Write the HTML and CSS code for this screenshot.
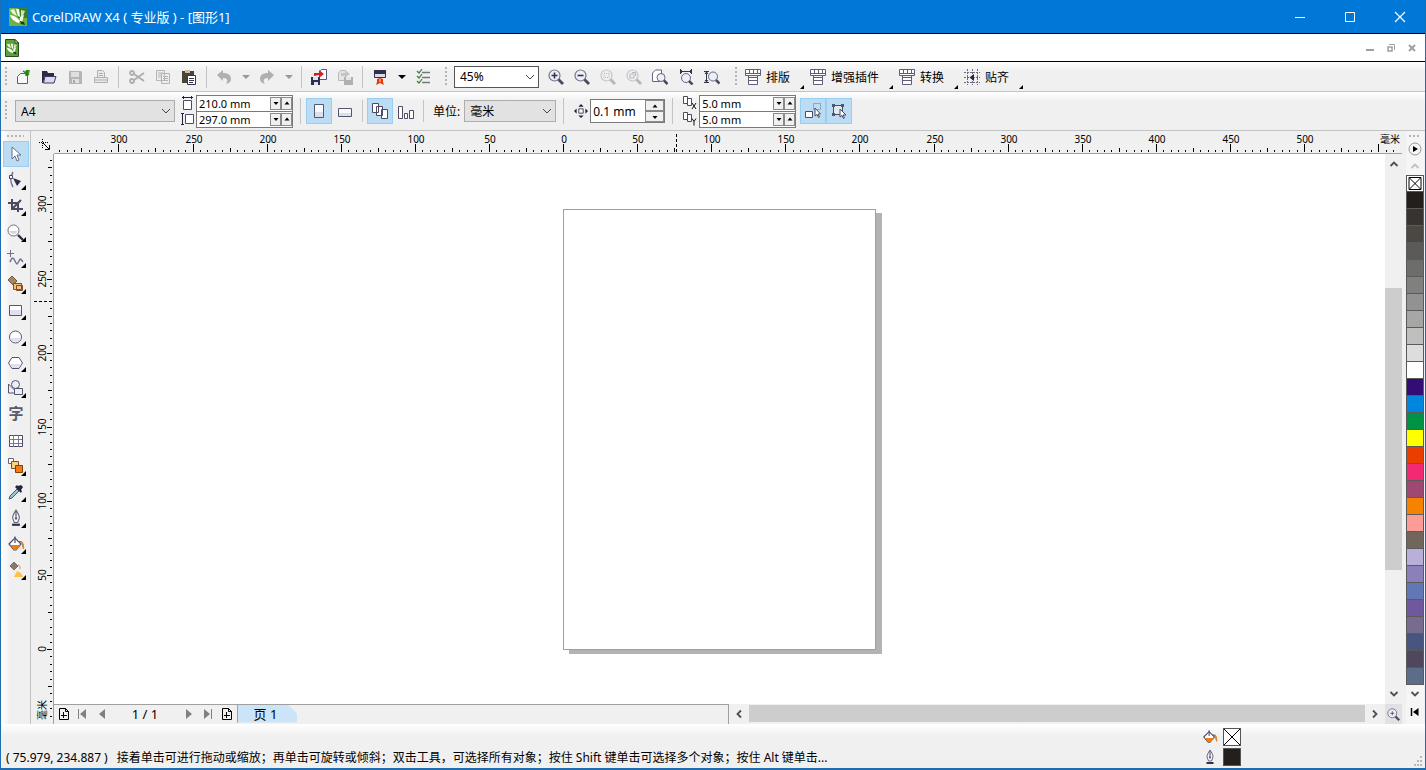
FILE: index.html
```html
<!DOCTYPE html>
<html lang="zh-CN">
<head>
  <meta charset="UTF-8">
  <meta name="viewport" content="width=device-width, initial-scale=1.0">
  <title>CorelDRAW X4 ( 专业版 ) - [图形1]</title>
  <link rel="stylesheet" href="styles.css">
</head>
<body>

<!-- Shared icons -->
<svg class="defs" aria-hidden="true">
  <symbol id="chev-down" viewBox="0 0 10 10"><path d="M1 3l4 4 4-4" fill="none" stroke="currentColor"/></symbol>
  <symbol id="chev" viewBox="0 0 10 10"><path d="M1.500 7L5 3.500 8.500 7" fill="none" stroke="currentColor" stroke-width="1.800"/></symbol>
  <symbol id="tri-down" viewBox="0 0 8 8"><path d="M0 2h8L4 6z" fill="currentColor"/></symbol>
  <symbol id="spin-down" viewBox="0 0 8 8"><path d="M1.500 3h5L4 6z"/></symbol>
  <symbol id="spin-up" viewBox="0 0 8 8"><path d="M1.500 5.500h5L4 2.500z"/></symbol>
  <symbol id="corner" viewBox="0 0 5 5"><path d="M5 0v5H0z"/></symbol>
  <symbol id="lens" viewBox="0 0 16 16"><circle cx="6.500" cy="6.500" r="5.500" fill="#eceef8" stroke="#77778c" stroke-width="1.200"/><path d="M10.500 10.500l4.500 4.500" stroke="#4a4a5c" stroke-width="2.800"/></symbol>
  <symbol id="streaks" viewBox="0 0 18 18"><path d="M1 2l4-1 3 7L4 6z" fill="#e9f5d8"/><path d="M7 1l3 0 1 8-2-1z" fill="#fff"/><path d="M12 2l4 1-3 7-1-1z" fill="#cfe6b4"/><path d="M1 7c3 0 7 2 10 6l-1 2C6 14 2 11 1 7z" fill="#fff"/><path d="M11 9l4-2-2 7-2-1z" fill="#f4faea"/><path d="M11 13l4 1 1 3-4-1z" fill="#1b3f14"/></symbol>
  <symbol id="logo" viewBox="0 0 18 18"><path d="M0 0h18v18H0z" fill="#6db33f"/><path d="M9 0h9v10H9z" fill="#3f7f2c"/><use href="#streaks"/></symbol>
  <symbol id="doc" viewBox="0 0 14 18"><path d="M.500.500h9.500l3.500 3.500v13.500H.500z" fill="#5da236" stroke="#2c4a24"/><path d="M10 .5V4h3.500z" fill="#dfe8d6" stroke="#2c4a24"/><svg x="1" y="3" width="12" height="14"><use href="#streaks"/></svg></symbol>
  <symbol id="macro" viewBox="0 0 16 16"><path d="M.5.500h15v6H.5zM3.500 8.500h9v7h-9zM3.500 11.500h9" fill="#fff" stroke="#5e5e7a"/><path d="M.5 4.500h15M4.500 1v4M8.500 1v4M12.500 1v4M3.500 6v3M12.500 6v3" stroke="#5e5e7a"/></symbol>
  <symbol id="bucket" viewBox="0 0 18 18"><path d="M2 9l6-6 6 6-5 6H7z" fill="#fff" stroke="#4c4c68" stroke-width="1.200"/><path d="M3 10h11l-5 5H7z" fill="#f07d12"/><path d="M8 8V1.500M12 7c3-1 4 1 4 5" fill="none" stroke="#4c4c68" stroke-width="1.200"/><path d="M14 7c2 1 2.500 3 2.500 7" fill="none" stroke="#e08a28" stroke-width="1.600"/></symbol>
  <symbol id="pen" viewBox="0 0 16 16"><path d="M8 1c-2 3-3 5-3 7l1.500 4h3L11 8c0-2-1-4-3-7z" fill="#f4f5fb" stroke="#66667e"/><path d="M8 2v6" stroke="#4f4f68"/><circle cx="8" cy="8.500" r="1" fill="#4f4f68"/><path d="M4.500 13h7v2h-7z" fill="#33334a"/></symbol>
  <symbol id="addpage" viewBox="0 0 12 12"><path d="M1.500.500h6l3 3v8h-9zM7.500.500v3h3M5.500 4v6M3 7.500h6" fill="none" stroke="#000"/></symbol>
</svg>

<div class="window">
  <header class="titlebar">
    <svg class="app-icon"><use href="#logo"/></svg>
    <h1>CorelDRAW X4 ( 专业版 ) - [图形1]</h1>
    <button class="win-btn" aria-label="最小化"><svg viewBox="0 0 12 12"><path d="M1 6.500h10" stroke="#fff"/></svg></button>
    <button class="win-btn" aria-label="最大化"><svg viewBox="0 0 12 12"><path d="M1.500 1.500h9v9h-9z" stroke="#fff" fill="none"/></svg></button>
    <button class="win-btn" aria-label="关闭"><svg viewBox="0 0 12 12"><path d="M1 1l10 10M11 1L1 11" stroke="#fff" stroke-width="1.200"/></svg></button>
  </header>

  <div class="menubar">
    <svg class="doc-icon"><use href="#doc"/></svg>
    <button class="mdi-btn" aria-label="最小化文档"><svg viewBox="0 0 10 10"><path d="M1 7h8" stroke="#a0a0a0" stroke-width="2"/></svg></button>
    <button class="mdi-btn" aria-label="还原文档"><svg viewBox="0 0 10 10"><path d="M3 1.500h5.500V7" fill="none" stroke="#a0a0a0"/><path d="M2 4h4v4H2z" fill="none" stroke="#a0a0a0" stroke-width="1.500"/></svg></button>
    <button class="mdi-btn" aria-label="关闭文档"><svg viewBox="0 0 10 10"><path d="M2 2l6 6M8 2L2 8" stroke="#a0a0a0" stroke-width="2"/></svg></button>
  </div>

  <!-- Standard toolbar -->
  <div class="toolbar standard">
    <span class="grip"></span>
    <button class="tool" aria-label="新建"><svg viewBox="0 0 16 16"><path d="M2.500 14.500v-7l3-3h7v10z" fill="#f7f8fc" stroke="#5d5d7c"/><path d="M9 4l2-3 4 0-1 4-3 2z" fill="#3d9a22"/><path d="M8 2l6 4M13 1l-2 6" stroke="#2d7d18" stroke-width="1.200"/></svg></button>
    <button class="tool" aria-label="打开"><svg viewBox="0 0 16 16"><path d="M1 2h5l1 2h6v3H4L2 14H1z" fill="#2b2b48"/><path d="M4 7.500h11l-2 6.500H2.500z" fill="#d7dbef" stroke="#3b3b5e"/></svg></button>
    <button class="tool" aria-label="保存" disabled><svg viewBox="0 0 16 16"><path d="M2 2h12l1 1v12H2z" fill="#b5b5b5"/><path d="M4 3h8v5H4zM5 10h7v4H5z" fill="#e0e0e0"/><path d="M6 11h2v3H6z" fill="#aaa"/></svg></button>
    <button class="tool" aria-label="打印" disabled><svg viewBox="0 0 16 16"><path d="M4.500 8V1.500h5l2 2V8M1.500 8.500h13v5h-13z" fill="#e8e8e8" stroke="#b0b0b0"/><path d="M6 4.500h4M6 6.500h4M2 11h12" stroke="#b0b0b0"/></svg></button>
    <span class="sep"></span>
    <button class="tool" aria-label="剪切" disabled><svg viewBox="0 0 16 16"><g fill="none" stroke="#adadad" stroke-width="1.800"><circle cx="3" cy="4" r="2"/><circle cx="3" cy="12" r="2"/><path d="M5 5l10 7M5 11l10-7"/></g></svg></button>
    <button class="tool" aria-label="复制" disabled><svg viewBox="0 0 16 16"><path d="M1.500 1.500h8v10h-8zM6.500 4.500h8v10h-8z" fill="#eee" stroke="#b5b5b5"/><path d="M3 4h5M3 6h3M3 8h3M8 7.500h5M8 9.500h5M8 11.500h5" stroke="#b5b5b5"/></svg></button>
    <button class="tool" aria-label="粘贴"><svg viewBox="0 0 16 16"><path d="M1 2h12v12H1z" fill="#4a4336"/><path d="M4 1h5v3H4z" fill="#c9bd9b"/><path d="M6.500 6.500h8v9h-8z" fill="#fff" stroke="#34345a"/><path d="M8 9.500h5M8 11.500h5M8 13.500h4" stroke="#34345a"/></svg></button>
    <span class="sep narrow"></span>
    <button class="tool" aria-label="撤消" disabled><svg viewBox="0 0 16 16"><path d="M1 6l6-5v3c5 0 8 2 8 6 0 3-2 4-5 5 2-3 2-6-3-6v3z" fill="#b0b0b0"/></svg></button>
    <button class="drop dim" aria-label="撤消列表" disabled><svg><use href="#tri-down"/></svg></button>
    <button class="tool" aria-label="重做" disabled><svg viewBox="0 0 16 16"><path d="M15 6L9 1v3c-5 0-8 2-8 6 0 3 2 4 5 5-2-3-2-6 3-6v3z" fill="#b0b0b0"/></svg></button>
    <button class="drop dim" aria-label="重做列表" disabled><svg><use href="#tri-down"/></svg></button>
    <span class="sep narrow"></span>
    <button class="tool" aria-label="导入"><svg viewBox="0 0 16 16"><path d="M8.500 10.500V3l2-2.500h5v10z" fill="#fff" stroke="#55557a"/><path d="M0 8h9v8H0z" fill="#2e2e50"/><path d="M2 8h5v3H2zM3 13h4v3H3z" fill="#dfe2f2"/><path d="M3 7V4h5V1l5 4-5 4V6z" fill="#d3201c"/></svg></button>
    <button class="tool" aria-label="导出" disabled><svg viewBox="0 0 16 16"><path d="M1.500 11.500V4l2-2.500h5v10z" fill="#e5e5e5" stroke="#b8b8b8"/><path d="M7 8h9v8H7z" fill="#b0b0b0"/><path d="M9 8h5v3H9z" fill="#e5e5e5"/><path d="M4 7V4h4V1l5 4-5 4V7z" fill="#c4c4c4"/></svg></button>
    <span class="sep narrow"></span>
    <button class="tool" aria-label="应用程序启动器"><svg viewBox="0 0 16 16"><path d="M2.500 1.500h11v7h-11z" fill="#d9dcea" stroke="#31314e"/><path d="M2 1h12v4H2z" fill="#31314e"/><path d="M5 10l3-1 3 1v3l1 3-4-2-4 2 1-3z" fill="#e3341a"/><path d="M7 10h2v3H7z" fill="#f79533"/></svg></button>
    <button class="drop" aria-label="启动器列表"><svg><use href="#tri-down"/></svg></button>
    <button class="tool" aria-label="选项"><svg viewBox="0 0 16 16"><path d="M7 3.500h8M7 8.500h8M7 13.500h8" stroke="#6c7c78" stroke-width="1.500"/><path d="M2 2l2 2 3-4M2 7l2 2 3-4M2 12l2 2 3-4" fill="none" stroke="#3b7a3a" stroke-width="1.200"/></svg></button>
    <span class="grip mid"></span>
    <label class="combo zoom-level"><select aria-label="缩放级别"><option>45%</option></select><svg><use href="#chev-down"/></svg></label>
    <button class="tool" aria-label="放大"><svg viewBox="0 0 16 16"><use href="#lens"/><path d="M3.500 6.500h6M6.500 3.500v6" stroke="#33334a" stroke-width="1.600"/></svg></button>
    <button class="tool" aria-label="缩小"><svg viewBox="0 0 16 16"><use href="#lens"/><path d="M3.500 6.500h6" stroke="#33334a" stroke-width="1.600"/></svg></button>
    <button class="tool faded" aria-label="缩放选定范围" disabled><svg viewBox="0 0 16 16"><use href="#lens"/><path d="M4 4.500h5v4H4z" fill="none" stroke="#555" stroke-dasharray="1 1"/></svg></button>
    <button class="tool faded" aria-label="缩放全部对象" disabled><svg viewBox="0 0 16 16"><use href="#lens"/><path d="M4 5h4v4H4zM6 3.500h3.500V7" fill="none" stroke="#555"/></svg></button>
    <button class="tool" aria-label="缩放页面"><svg viewBox="0 0 16 16"><path d="M.5 12.500V4l3-3h6v11.500z" fill="#fff" stroke="#66667f"/><circle cx="9" cy="8.500" r="4" fill="#eceef8" stroke="#66667f"/><path d="M12 11.500l3.500 3.500" stroke="#4a4a5c" stroke-width="2.500"/></svg></button>
    <button class="tool" aria-label="按页宽显示"><svg viewBox="0 0 16 16"><circle cx="8" cy="9" r="4.500" fill="#eceef8" stroke="#66667f"/><path d="M11 12l3.500 3.500" stroke="#4a4a5c" stroke-width="2.500"/><path d="M2 2.500h12M2.500 0v5M13.500 0v5M4 1L2.500 2.500 4 4M12 1l1.500 1.500L12 4" fill="none" stroke="#33334a"/></svg></button>
    <button class="tool" aria-label="按页高显示"><svg viewBox="0 0 16 16"><circle cx="9" cy="7.500" r="4.500" fill="#eceef8" stroke="#66667f"/><path d="M12 11l3.500 3.500" stroke="#4a4a5c" stroke-width="2.500"/><path d="M2.500 2v12M0 2.500h5M0 13.500h5M1 5l1.500-2L4 5M1 11l1.500 2L4 11" fill="none" stroke="#33334a"/></svg></button>
    <span class="grip macro-grip"></span>
    <button class="macro"><svg class="ico"><use href="#macro"/></svg>排版<svg class="corner"><use href="#corner"/></svg></button>
    <button class="macro"><svg class="ico"><use href="#macro"/></svg>增强插件<svg class="corner"><use href="#corner"/></svg></button>
    <button class="macro"><svg class="ico"><use href="#macro"/></svg>转换<svg class="corner"><use href="#corner"/></svg></button>
    <button class="macro"><svg class="ico" viewBox="0 0 16 16"><path d="M3.500 0v16M8.500 0v16M13.500 0v16M0 3.500h16M0 8.500h16M0 13.500h16" stroke="#6a6a80" stroke-dasharray="2 1"/><path d="M10 5v7L5.500 8.500z" fill="#26263c"/></svg>贴齐<svg class="corner"><use href="#corner"/></svg></button>
  </div>

  <!-- Property bar -->
  <div class="toolbar property">
    <span class="grip"></span>
    <label class="combo paper"><select aria-label="纸张类型"><option>A4</option></select><svg><use href="#chev-down"/></svg></label>
    <div class="pair-icons dims">
      <svg viewBox="0 0 14 14"><path d="M3.500 4.500h8v9h-8z" fill="#fff" stroke="#4b4b63"/><path d="M2 1.500h11M3.500 0v3M11.500 0v3" stroke="#22223a"/></svg>
      <svg viewBox="0 0 14 14"><path d="M5.500 2.500h8v9h-8z" fill="#fff" stroke="#4b4b63"/><path d="M2.500 1v12M1 1.500h3M1 12.500h3" stroke="#22223a"/></svg>
    </div>
    <div class="spin-pair">
      <div class="spin"><input aria-label="纸张宽度" value="210.0 mm"><button aria-label="减小宽度"><svg><use href="#spin-down"/></svg></button><button aria-label="增大宽度"><svg><use href="#spin-up"/></svg></button></div>
      <div class="spin"><input aria-label="纸张高度" value="297.0 mm"><button aria-label="减小高度"><svg><use href="#spin-down"/></svg></button><button aria-label="增大高度"><svg><use href="#spin-up"/></svg></button></div>
    </div>
    <span class="sep wide"></span>
    <button class="tool on" aria-label="纵向"><svg viewBox="0 0 16 16"><path d="M3.500 1.500h9v13h-9z" fill="#f8f9fd" stroke="#55556f"/><path d="M4 9h8v5H4z" fill="#dcdfec"/></svg></button>
    <button class="tool" aria-label="横向"><svg viewBox="0 0 16 16"><path d="M1.500 5.500h13v8h-13z" fill="#f8f9fd" stroke="#55556f"/><path d="M2 10h12v3H2z" fill="#dcdfec"/></svg></button>
    <span class="sep narrow"></span>
    <button class="tool on" aria-label="应用于所有页面"><svg viewBox="0 0 16 16"><g fill="#fff" stroke="#4b4b63"><path d="M.5.500h6v9h-6zM4.500 3.500h6v9h-6zM9.500 6.500h6v9h-6z"/></g></svg></button>
    <button class="tool" aria-label="应用于当前页面"><svg viewBox="0 0 16 16"><g fill="#fff" stroke="#4b4b63"><path d="M.5 3.500h4v12h-4zM6.500 10.500h3v5h-3zM11.500 7.500h4v8h-4z"/></g></svg></button>
    <span class="sep narrow"></span>
    <label class="unit-label" for="unit">单位:</label>
    <span class="combo unit"><select id="unit"><option>毫米</option></select><svg><use href="#chev-down"/></svg></span>
    <span class="sep wide"></span>
    <svg class="nudge-icon" viewBox="0 0 16 16"><path d="M5.500 5.500h5v5h-5z" fill="#fff" stroke="#33334a"/><path d="M8 0l3 3H5zM8 16l3-3H5zM0 8l3-3v6zM16 8l-3-3v6z" fill="#22223a"/></svg>
    <div class="spin single"><input aria-label="微调偏移" value="0.1 mm"><div class="stack"><button aria-label="增大偏移"><svg><use href="#spin-up"/></svg></button><button aria-label="减小偏移"><svg><use href="#spin-down"/></svg></button></div></div>
    <span class="sep wide"></span>
    <div class="pair-icons dup">
      <svg viewBox="0 0 14 14"><path d="M.5.500h4v7h-4zM4.500 2.500h4v7h-4z" fill="#fff" stroke="#4b4b63"/><path d="M9 7l4 6M13 7l-4 6" stroke="#111"/></svg>
      <svg viewBox="0 0 14 14"><path d="M.5.500h4v7h-4zM4.500 2.500h4v7h-4z" fill="#fff" stroke="#4b4b63"/><path d="M9 6.500l2 3 2-3M11 9.500v4" fill="none" stroke="#111"/></svg>
    </div>
    <div class="spin-pair">
      <div class="spin"><input aria-label="再制距离 X" value="5.0 mm"><button aria-label="减小 X"><svg><use href="#spin-down"/></svg></button><button aria-label="增大 X"><svg><use href="#spin-up"/></svg></button></div>
      <div class="spin"><input aria-label="再制距离 Y" value="5.0 mm"><button aria-label="减小 Y"><svg><use href="#spin-down"/></svg></button><button aria-label="增大 Y"><svg><use href="#spin-up"/></svg></button></div>
    </div>
    <div class="toggles">
      <button class="tool on" aria-label="移动时绘制复杂对象"><svg viewBox="0 0 16 16"><path d="M.5 8.500h7v6h-7z" fill="#fff" stroke="#4b4b63"/><path d="M8.500.5h7v6h-7z" fill="none" stroke="#6b7890" stroke-dasharray="1 1"/><path d="M10 5v8l2-1.500 1.500 3 1-.5-1.500-3h2.500z" fill="#fff" stroke="#4b4b63"/></svg></button>
      <button class="tool on" aria-label="视为已填充"><svg viewBox="0 0 16 16"><path d="M2.500 2.500h9v9h-9z" fill="#dfe9f4" stroke="#4b4b63"/><path d="M1 1h3v3H1zM10 1h3v3h-3zM1 10h3v3H1z" fill="#55556c"/><path d="M9 6v8l2-1.500 1.500 3 1-.5-1.500-3h3z" fill="#fff" stroke="#4b4b63"/></svg></button>
    </div>
  </div>

  <div class="main">
    <!-- Toolbox -->
    <nav class="toolbox" aria-label="工具箱">
      <span class="grip-h"></span>
      <button class="tool on" aria-label="挑选工具"><svg viewBox="0 0 18 18"><path d="M5 2v12l3-3 2 5 2-1-2-5h4z" fill="#fff" stroke="#67718a"/></svg></button>
      <button class="tool" aria-label="形状工具"><svg viewBox="0 0 18 18"><path d="M6 1C3 6 3 11 6 16" fill="none" stroke="#6d7896" stroke-width="1.500"/><path d="M2.500 4.500h3v3h-3z" fill="#fff" stroke="#44446a"/><path d="M6 7l8 3-4 5z" fill="#2c2c48"/></svg><svg class="corner"><use href="#corner"/></svg></button>
      <button class="tool" aria-label="裁剪工具"><svg viewBox="0 0 18 18"><path d="M5 2v10h11M1 6h10v9M5 12l9-9" fill="none" stroke="#4a4a62" stroke-width="2"/></svg><svg class="corner"><use href="#corner"/></svg></button>
      <button class="tool" aria-label="缩放工具"><svg viewBox="0 0 18 18"><circle cx="6.500" cy="7.500" r="5.500" fill="#fff" stroke="#6a6a80"/><path d="M2.500 8h8c-1 4-7 4-8 0z" fill="#d2d6e2"/><path d="M11 12l5 5" stroke="#2e2e40" stroke-width="2.400"/></svg><svg class="corner"><use href="#corner"/></svg></button>
      <button class="tool" aria-label="手绘工具"><svg viewBox="0 0 18 18"><path d="M3.500 1v7M0 4.500h7" stroke="#6d7088"/><path d="M3 13c2-5 3-5 5-1s2 4 4 0 2-1 4 1" fill="none" stroke="#6e7290" stroke-width="1.500"/></svg><svg class="corner"><use href="#corner"/></svg></button>
      <button class="tool" aria-label="智能填充工具"><svg viewBox="0 0 18 18"><path d="M1 5l4-4 5 5-4 4z" fill="#a98658" stroke="#6a5a50"/><path d="M6.500 8.500h8v6h-8zM9.500 10.500h6v5h-6z" fill="#f5c07b" stroke="#7b4e2c"/></svg><svg class="corner"><use href="#corner"/></svg></button>
      <button class="tool" aria-label="矩形工具"><svg viewBox="0 0 18 18"><path d="M2.500 4.500h12v10h-12z" fill="#fff" stroke="#55556f"/><path d="M3 9h11v5H3z" fill="#dfe1ec"/></svg><svg class="corner"><use href="#corner"/></svg></button>
      <button class="tool" aria-label="椭圆工具"><svg viewBox="0 0 18 18"><circle cx="8.500" cy="10" r="6" fill="#fff" stroke="#55556f"/><path d="M3 11h11c-1 5-10 5-11 0z" fill="#dfe1ec"/></svg><svg class="corner"><use href="#corner"/></svg></button>
      <button class="tool" aria-label="多边形工具"><svg viewBox="0 0 18 18"><path d="M5 4.500h7l3.500 5.500-3.500 5.500H5L1.500 10z" fill="#fff" stroke="#55556f"/><path d="M2.500 11h12l-3 4h-6z" fill="#dfe1ec"/></svg><svg class="corner"><use href="#corner"/></svg></button>
      <button class="tool" aria-label="基本形状"><svg viewBox="0 0 18 18"><g fill="#eceef6" stroke="#55556f"><path d="M1.500 5v9h9z"/><circle cx="8.500" cy="5.500" r="4"/><path d="M7.500 9.500h8v6h-8z"/></g></svg><svg class="corner"><use href="#corner"/></svg></button>
      <button class="tool text-tool" aria-label="文本工具">字</button>
      <button class="tool" aria-label="表格工具"><svg viewBox="0 0 18 18"><path d="M2.500 4.500h13v11h-13z" fill="#fff" stroke="#4b4b68"/><path d="M6.500 4v12M11.500 4v12M2 8.500h13M2 12.500h13" stroke="#77779a"/></svg></button>
      <button class="tool" aria-label="交互式调和工具"><svg viewBox="0 0 18 18"><path d="M1.500 1.500h5v5h-5z" fill="#fff" stroke="#66667a"/><path d="M4.500 4.500h7v7h-7z" fill="#ffd27a" stroke="#66543a"/><path d="M8.500 8.500h7v7h-7z" fill="#f47a12" stroke="#8a3c08"/></svg><svg class="corner"><use href="#corner"/></svg></button>
      <button class="tool" aria-label="滴管工具"><svg viewBox="0 0 18 18"><path d="M2 16l1-3 7-7 2 2-7 7z" fill="#9cc4cf" stroke="#44606e"/><path d="M8 4l6 6 1-2-1-1 2-3-2-2-3 1-1-1z" fill="#26263a"/></svg><svg class="corner"><use href="#corner"/></svg></button>
      <button class="tool" aria-label="轮廓工具"><svg viewBox="0 0 16 16"><use href="#pen"/></svg><svg class="corner"><use href="#corner"/></svg></button>
      <button class="tool" aria-label="填充工具"><svg><use href="#bucket"/></svg><svg class="corner"><use href="#corner"/></svg></button>
      <button class="tool" aria-label="交互式填充工具"><svg viewBox="0 0 18 18"><path d="M3 5l4-4 4 4-4 4z" fill="#8d7a60" stroke="#77707f"/><path d="M11 4c2 0 2 2 2 4" fill="none" stroke="#dd9430"/><path d="M7 16l3-6 4 2 2 4z" fill="#ffbf4a"/></svg><svg class="corner"><use href="#corner"/></svg></button>
    </nav>

    <!-- Drawing window -->
    <main class="workspace">
      <div class="origin"><svg viewBox="0 0 12 12"><path d="M3.500 0v9M0 3.500h9" stroke="#000" stroke-dasharray="1 1"/><path d="M4 4l6 6M10.500 6v4.500H6" fill="none" stroke="#000"/></svg></div>
      <div class="ruler-top"><svg id="rulerTop"></svg></div>
      <div class="ruler-left"><svg id="rulerLeft"></svg></div>
      <div class="canvas"><div class="page"></div></div>
      <div class="vscroll">
        <button aria-label="向上滚动"><svg><use href="#chev"/></svg></button>
        <div class="track"><span class="space-before"></span><span class="thumb"></span><span class="space-after"></span></div>
        <button aria-label="向下滚动"><svg class="down"><use href="#chev"/></svg></button>
      </div>
      <div class="bottom">
        <div class="pages">
          <button class="nav" aria-label="在前面添加页"><svg viewBox="0 0 12 12"><use href="#addpage"/></svg></button>
          <button class="nav" aria-label="第一页"><svg viewBox="0 0 12 12"><path d="M1.500 1v10" stroke="#808080"/><path d="M9 1v10L3 6z" fill="#808080"/></svg></button>
          <button class="nav" aria-label="上一页"><svg viewBox="0 0 12 12"><path d="M9 1v10L3 6z" fill="#808080"/></svg></button>
          <span class="page-count">1 / 1</span>
          <button class="nav" aria-label="下一页"><svg viewBox="0 0 12 12"><path d="M3 1v10l6-5z" fill="#808080"/></svg></button>
          <button class="nav" aria-label="最后一页"><svg viewBox="0 0 12 12"><path d="M9.500 1v10" stroke="#808080"/><path d="M2 1v10l6-5z" fill="#808080"/></svg></button>
          <button class="nav" aria-label="在后面添加页"><svg viewBox="0 0 12 12"><use href="#addpage"/></svg></button>
          <button class="page-tab">页 1</button>
        </div>
        <div class="hscroll">
          <button aria-label="向左滚动"><svg class="left"><use href="#chev"/></svg></button>
          <span class="thumb"></span>
          <button aria-label="向右滚动"><svg class="right"><use href="#chev"/></svg></button>
        </div>
      </div>
      <button class="navigator" aria-label="导航器"><svg viewBox="0 0 16 16"><use href="#lens"/><path d="M4 6.500h5M6.500 4v5" stroke="#44445a"/></svg></button>
    </main>

    <!-- Colour palette -->
    <aside class="palette" aria-label="调色板">
      <span class="grip-h"></span>
      <button class="round" aria-label="调色板菜单"><svg viewBox="0 0 14 14"><circle cx="7" cy="7" r="6" fill="#f5f5f5" stroke="#999"/><path d="M5 4v6l5-3z"/></svg></button>
      <button class="scroll light" aria-label="上移"><svg><use href="#chev"/></svg></button>
      <button class="swatch none" aria-label="无填充"><svg viewBox="0 0 15 15"><path d="M1.500 1.500h12v12h-12zM2 2l11 11M13 2L2 13" fill="none" stroke="#000"/></svg></button>
      <div class="swatches" id="swatches"></div>
      <button class="scroll" aria-label="下移"><svg class="down"><use href="#chev"/></svg></button>
      <button class="scroll expand" aria-label="展开调色板"><svg viewBox="0 0 10 10"><path d="M1.500 1v8" stroke="#000" stroke-width="1.500"/><path d="M8.500 1v8L3 5z"/></svg></button>
    </aside>
  </div>

  <footer class="status">
    <p><span class="coords">( 75.979, 234.887 )</span>接着单击可进行拖动或缩放；再单击可旋转或倾斜；双击工具，可选择所有对象；按住 Shift 键单击可选择多个对象；按住 Alt 键单击...</p>
    <div class="fill-info">
      <svg class="ico"><use href="#bucket"/></svg><span class="chip"><svg viewBox="0 0 16 16"><path d="M0 0l16 16M16 0L0 16" stroke="#000"/></svg></span>
      <svg class="ico"><use href="#pen"/></svg><span class="chip dark"></span>
    </div>
    <svg class="resize" viewBox="0 0 10 10"><path d="M7 0h2v2H7zM7 4h2v2H7zM7 8h2v2H7zM4 4h2v2H4zM4 8h2v2H4zM1 8h2v2H1z" fill="#b8b8b8"/></svg>
  </footer>
</div>

<script src="script.js"></script>
</body>
</html>
```
FILE: styles.css
```css
* {
  box-sizing: border-box;
}

body {
  margin: 0;
  font-family: "Noto Sans", "Noto Sans CJK SC", sans-serif;
  font-size: 12px;
  color: #000;
}

button, input, select {
  font: inherit;
  color: inherit;
  margin: 0;
  padding: 0;
  border: 0;
  background: none;
  border-radius: 0;
}

h1, p {
  margin: 0;
  font-weight: normal;
}

svg {
  display: block;
  flex: none;
}

.defs {
  position: absolute;
  width: 0;
  height: 0;
}

.window {
  display: flex;
  flex-direction: column;
  height: 100vh;
  border: 1px solid #1f6cb0;
  border-top: 0;
  background: #f0f0f0;
  overflow: hidden;
}

/* title and menu */
.titlebar {
  display: flex;
  align-items: center;
  height: 34px;
  flex: none;
  padding-left: 8px;
  background: #0078d7;
  border-bottom: 1px solid #000;
  color: #fff;
}

.titlebar h1 {
  flex: 1;
  padding-left: 5px;
  font-size: 13px;
}

.app-icon {
  width: 18px;
  height: 18px;
}

.win-btn {
  display: flex;
  justify-content: center;
  width: 50px;
}

.win-btn svg {
  width: 12px;
  height: 12px;
}

.menubar {
  display: flex;
  align-items: center;
  height: 28px;
  flex: none;
  padding: 0 3px 0 4px;
  background: #fff;
  border-bottom: 1px solid #000;
}

.doc-icon {
  width: 14px;
  height: 18px;
  margin-right: auto;
}

.mdi-btn {
  display: flex;
  justify-content: center;
  width: 21px;
}

.mdi-btn svg {
  width: 10px;
  height: 10px;
}

/* toolbars */
.toolbar {
  display: flex;
  align-items: center;
  flex: none;
  background: linear-gradient(#fff, #f0f0f0 9px);
  border-bottom: 1px solid #c3c3c3;
}

.standard {
  height: 30px;
}

.property {
  height: 39px;
}

.grip {
  width: 3px;
  height: 20px;
  margin: 0 3px;
  background: repeating-linear-gradient(#b4b4b4 0 2px, transparent 2px 4px) center / 2px 100% no-repeat;
}

.grip.mid {
  margin: 0 7px 0 8px;
}

.grip.macro-grip {
  margin: 0 8px 0 9px;
}

.sep {
  width: 1px;
  height: 22px;
  margin: 0 5px 0 4px;
  background: #c4c4c4;
}

.sep.narrow {
  margin: 0 4px;
}

.sep.wide {
  margin: 0 5px 0 7px;
  height: 26px;
}

.tool {
  display: flex;
  align-items: center;
  justify-content: center;
  position: relative;
  width: 26px;
  height: 26px;
  flex: none;
}

.tool svg {
  width: 16px;
  height: 16px;
}

.tool.on {
  background: #bcdcf4;
  border: 1px solid #99cdf1;
}

.tool.faded {
  opacity: 0.35;
}

.drop {
  display: flex;
  justify-content: center;
  width: 17px;
}

.drop svg {
  width: 8px;
  height: 8px;
}

.drop.dim {
  color: #999;
}

.macro {
  display: flex;
  align-items: center;
  position: relative;
  height: 28px;
  margin-right: 6px;
  padding-right: 14px;
}

.macro .ico {
  width: 16px;
  height: 16px;
  margin-right: 5px;
}

.corner,
.tool .corner {
  position: absolute;
  right: 0;
  bottom: 2px;
  width: 4px;
  height: 4px;
}

.combo {
  display: flex;
  position: relative;
  flex: none;
  height: 22px;
  background: #e2e2e2;
  border: 1px solid #adadad;
}

.combo select {
  appearance: none;
  width: 100%;
  padding-left: 5px;
}

.combo svg {
  position: absolute;
  right: 3px;
  top: 5px;
  width: 10px;
  height: 10px;
  pointer-events: none;
  color: #444;
}

.zoom-level {
  width: 85px;
  margin-right: 4px;
  background: #fff;
  border-color: #555;
}

.paper {
  width: 160px;
  margin: 0 5px;
}

.unit {
  width: 92px;
}

.unit-label {
  padding: 0 4px 0 5px;
}

.pair-icons svg {
  width: 14px;
  height: 14px;
  margin: 1px 2px 2px 0;
}

.spin-pair {
  width: 97px;
  border: 1px solid #7a7a7a;
}

.spin {
  display: flex;
  align-items: center;
  height: 15px;
  background: #fff;
  font-size: 11px;
}

.spin + .spin {
  height: 16px;
  border-top: 1px solid #7a7a7a;
}

.spin input {
  flex: 1;
  min-width: 0;
  height: 15px;
  padding-left: 2px;
  outline: 0;
}

.spin button {
  display: flex;
  align-items: center;
  justify-content: center;
  width: 11px;
  height: 13px;
  border: 1px solid #8a8a8a;
  background: #f0f0f0;
}

.spin button svg {
  width: 8px;
  height: 8px;
}

.spin.single {
  width: 75px;
  height: 24px;
  border: 1px solid #7a7a7a;
  font-size: 12px;
}

.spin.single .stack button {
  width: 19px;
  height: 11px;
}

.nudge-icon {
  width: 14px;
  height: 14px;
  margin: 0 2px 0 5px;
}

.dup {
  padding-left: 5px;
}

.toggles {
  display: flex;
  margin-left: 4px;
}

/* middle part */
.main {
  display: flex;
  flex: 1;
  min-height: 0;
}

.toolbox {
  width: 30px;
  flex: none;
  padding: 0 2px;
  background: linear-gradient(90deg, #fff, #f0f0f0 9px);
  border-right: 1px solid #c3c3c3;
}

.grip-h {
  display: block;
  height: 10px;
  margin: 0 4px;
  background: repeating-linear-gradient(90deg, #b4b4b4 0 2px, transparent 2px 4px) 0 4px / 100% 2px no-repeat;
}

.toolbox .tool svg {
  width: 18px;
  height: 18px;
}

.toolbox .tool .corner {
  right: 3px;
  bottom: 3px;
  width: 5px;
  height: 5px;
}

.toolbox .text-tool {
  padding-bottom: 3px;
  font-size: 15px;
  font-weight: bold;
  color: #5a5a6c;
}

.workspace {
  display: grid;
  grid-template-columns: 23px 1fr 17px;
  grid-template-rows: 23px 1fr 20px;
  flex: 1;
  min-width: 0;
}

.origin {
  padding: 8px 0 0 8px;
}

.origin svg {
  width: 12px;
  height: 12px;
}

.ruler-top {
  grid-column: 2 / 4;
  border-bottom: 1px solid #a0a0a0;
}

.ruler-left {
  grid-row: 2 / 4;
  grid-column: 1;
  border-right: 1px solid #a0a0a0;
  overflow: hidden;
}

.ruler-top svg,
.ruler-left svg {
  width: 100%;
  height: 100%;
  font-size: 10px;
}

.ruler-top text,
.ruler-left text {
  text-anchor: middle;
}

.ruler-top path,
.ruler-left path {
  stroke: #000;
  shape-rendering: crispEdges;
}

.canvas {
  grid-column: 2;
  grid-row: 2;
  position: relative;
  background: #fff;
  overflow: hidden;
}

.page {
  position: absolute;
  left: 509px;
  top: 55px;
  width: 313px;
  height: 441px;
  background: #fff;
  border: 1px solid #a0a0a0;
  box-shadow: 6px 4px 0 #b3b3b3;
}

.vscroll {
  grid-column: 3;
  grid-row: 2;
  display: flex;
  flex-direction: column;
}

.vscroll button,
.hscroll button {
  display: flex;
  align-items: center;
  justify-content: center;
  flex: none;
  width: 20px;
  height: 20px;
  color: #505050;
}

.vscroll button {
  width: 17px;
}

.vscroll svg,
.hscroll svg,
.scroll svg {
  width: 10px;
  height: 10px;
}

svg.down {
  transform: rotate(180deg);
}

svg.left {
  transform: rotate(-90deg);
}

svg.right {
  transform: rotate(90deg);
}

.track {
  display: flex;
  flex-direction: column;
  flex: 1;
}

.space-before {
  flex: 114;
}

.track .thumb {
  flex: 282;
}

.space-after {
  flex: 114;
}

.thumb {
  background: #cdcdcd;
}

.bottom {
  grid-column: 2;
  grid-row: 3;
  display: flex;
}

.pages {
  display: flex;
  align-items: center;
  flex: 674;
  padding-bottom: 2px;
  border-top: 1px solid #a0a0a0;
  border-right: 1px solid #a0a0a0;
}

.nav {
  display: flex;
  justify-content: center;
  width: 19px;
}

.nav svg {
  width: 12px;
  height: 12px;
}

.page-count {
  width: 68px;
  text-align: center;
  font-size: 13px;
  line-height: 16px;
}

.page-tab {
  width: 60px;
  height: 18px;
  margin-left: 1px;
  padding-right: 4px;
  background: #cce4f7;
  border-left: 1px solid #a0a0a0;
  clip-path: polygon(0 0, 51px 0, 100% 9px, 100% 100%, 0 100%);
  font-size: 13px;
  line-height: 16px;
}

.hscroll {
  display: flex;
  flex: 657;
}

.hscroll .thumb {
  flex: 1;
  height: 17px;
  margin-top: 1px;
}

.navigator {
  display: flex;
  align-items: center;
  justify-content: center;
  background: #e1e1e5;
}

.navigator svg {
  width: 13px;
  height: 13px;
}

.palette {
  display: flex;
  flex-direction: column;
  width: 18px;
  flex: none;
  margin: 0 1px 0 4px;
  background: #f5f5f5;
}

.palette .grip-h {
  margin: 0 3px;
}

.round {
  display: flex;
  justify-content: center;
  align-items: center;
  height: 16px;
}

.round svg {
  width: 14px;
  height: 14px;
}

.scroll {
  display: flex;
  justify-content: center;
  align-items: center;
  height: 18px;
  color: #505050;
}

.scroll.light {
  color: #c0c0c0;
}

.scroll.expand {
  height: 17px;
}

.swatch {
  display: block;
  width: 100%;
  height: 17px;
  border: 1px solid #5a5a5a;
  border-top: 0;
}

.swatch.none {
  background: #fff;
  border: 1px solid #555;
}

.swatch.none svg {
  width: 16px;
  height: 15px;
}

/* status bar */
.status {
  display: flex;
  align-items: flex-end;
  height: 45px;
  flex: none;
  padding-left: 5px;
  background: linear-gradient(#fff, #f0f0f0 12px);
  border-bottom: 1px solid #1f6cb0;
}

.status p {
  flex: 1;
  min-width: 0;
  overflow: hidden;
  white-space: nowrap;
  line-height: 20px;
}

.coords {
  margin-right: 9px;
}

.fill-info {
  display: grid;
  grid-template-columns: 16px 18px;
  gap: 2px 5px;
  align-items: center;
  padding-bottom: 2px;
}

.fill-info .ico {
  width: 16px;
  height: 16px;
}

.chip {
  height: 18px;
  background: #fff;
  border: 1px solid #555;
}

.chip.dark {
  background: #231f1c;
}

.resize {
  width: 10px;
  height: 10px;
  margin: 0 2px 2px 172px;
}
```
FILE: script.js
```js
// pixels per millimetre at 45% zoom
var SCALE = 1.482;
var UNIT = '毫米';

function tickLength(mm, major) {
  if (mm % 50 === 0) return major;
  if (mm % 25 === 0) return 4;
  return 2;
}

function drawTop() {
  var origin = 509;
  var d = '';
  var labels = '';
  for (var mm = -340; mm <= 560; mm += 5) {
    var x = Math.round(origin + mm * SCALE);
    d += 'M' + (x + 0.5) + ' 21v-' + tickLength(mm, 8);
    if (mm % 50 === 0 && mm <= 500) {
      labels += '<text x="' + (x + 1) + '" y="12">' + Math.abs(mm) + '</text>';
    }
  }
  labels += '<text x="1336" y="12">' + UNIT + '</text>';
  document.getElementById('rulerTop').innerHTML =
    '<path d="' + d + '"/><path d="M622.5 3v19" stroke-dasharray="3 2"/>' + labels;
}

function drawLeft() {
  var origin = 495;
  var d = '';
  var labels = '';
  for (var mm = -45; mm <= 330; mm += 5) {
    var y = Math.round(origin - mm * SCALE);
    d += 'M21 ' + (y + 0.5) + 'h-' + tickLength(mm, 5);
    if (mm % 50 === 0) {
      labels += '<text transform="translate(15 ' + y + ') rotate(-90)">' + mm + '</text>';
    }
  }
  labels += '<text transform="translate(15 556) rotate(-90)">' + UNIT + '</text>';
  document.getElementById('rulerLeft').innerHTML =
    '<path d="' + d + '"/><path d="M3 147.5h19" stroke-dasharray="3 2"/>' + labels;
}

function drawSwatches() {
  var colors = [
    '#231f1c', '#37332f', '#4b4743', '#5b5a58', '#6d6d6b', '#80807e', '#929292',
    '#a6a6a5', '#bfbfbd', '#dddddd', '#ffffff', '#330d73', '#0086df', '#009245',
    '#ffff00', '#ea3d00', '#f12a73', '#9f4872', '#f58200', '#fb9c96', '#70665b',
    '#b9afd9', '#8c80b8', '#6177b6', '#70589f', '#786c8e', '#48557f', '#4f475c',
    '#5c6d87'
  ];
  var box = document.getElementById('swatches');
  for (var i = 0; i < colors.length; i++) {
    var b = document.createElement('button');
    b.className = 'swatch';
    b.style.background = colors[i];
    b.setAttribute('aria-label', colors[i]);
    box.appendChild(b);
  }
}

drawTop();
drawLeft();
drawSwatches();
```
